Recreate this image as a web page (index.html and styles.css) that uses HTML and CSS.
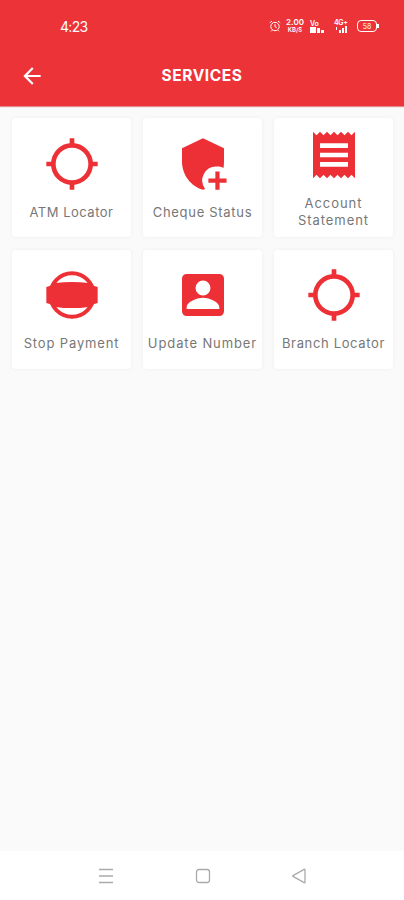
FILE: index.html
```
<!DOCTYPE html>
<html lang="en">
<head>
    <meta charset="UTF-8">
    <meta name="viewport" content="width=device-width, initial-scale=1.0">
    <title>Services</title>
    <link rel="stylesheet" href="styles.css">
</head>
<body>

    <header class="header">
        <!-- Phone status bar -->
        <div class="status-bar">
            <span class="time">4:23</span>
            <div class="status-icons">
                <svg class="alarm" viewBox="0 0 12 12" width="12" height="12">
                    <circle cx="6" cy="6.5" r="4.2"/>
                    <path d="M6 4.2v2.5l1.7.8M.8 2.8 3 1M11.2 2.8 9 1M3 10.3l-1 1M9 10.3l1 1"/>
                </svg>
                <div class="speed"><b>2.00</b><span>KB/S</span></div>
                <div class="network volte">
                    <span>Vo</span>
                    <svg viewBox="0 0 14 6" width="14" height="6"><path d="M0 0h6v6H0zM7 1h3v5H7zM11 3h3v3h-3z"/></svg>
                </div>
                <div class="network lte">
                    <span>4G+</span>
                    <svg viewBox="0 0 14 7" width="14" height="7"><path d="M2 1h1v3H2zM5 4h2v3H5zM8 2h2v5H8zM11 0h2v7h-2z"/></svg>
                </div>
                <div class="battery"><span>58</span></div>
            </div>
        </div>

        <!-- Title bar -->
        <div class="title-bar">
            <svg class="back" viewBox="0 0 24 24" width="26" height="26">
                <path d="M20 11H7.83l5.59-5.59L12 4l-8 8 8 8 1.41-1.41L7.83 13H20z"/>
            </svg>
            <h1>SERVICES</h1>
        </div>
    </header>

    <!-- Services -->
    <main class="services">
        <div class="card">
            <svg class="icon" viewBox="0 0 24 24">
                <circle class="ring" cx="12" cy="12" r="8"/>
                <path d="M11 1h2v3.2h-2zM11 19.8h2V23h-2zM1 11h3.2v2H1zM19.8 11H23v2h-3.2z"/>
            </svg>
            <span class="label atm">ATM Locator</span>
        </div>
        <div class="card">
            <svg class="icon" viewBox="0 0 24 24">
                <path d="M12 1 3 5.2V11c0 5.5 3.8 10.6 9 12l.9-.3A6 6 0 0 1 18.1 13.1c1 0 1.9.2 2.7.6.1-.9.2-1.8.2-2.7V5.2z"/>
                <path d="M17.3 15.2h1.8v3h3V20h-3v3h-1.8v-3h-3v-1.8h3z"/>
            </svg>
            <span class="label cheque">Cheque Status</span>
        </div>
        <div class="card">
            <svg class="icon" viewBox="0 0 24 24">
                <path d="M18 17H6v-2h12v2zm0-4H6v-2h12v2zm0-4H6V7h12v2zM3 22l1.5-1.5L6 22l1.5-1.5L9 22l1.5-1.5L12 22l1.5-1.5L15 22l1.5-1.5L18 22l1.5-1.5L21 22V2l-1.5 1.5L18 2l-1.5 1.5L15 2l-1.5 1.5L12 2l-1.5 1.5L9 2 7.5 3.5 6 2 4.5 3.5 3 2v20z"/>
            </svg>
            <span class="label account">Account<br>Statement</span>
        </div>
        <div class="card">
            <svg class="icon" viewBox="0 0 24 24">
                <circle class="ring thin" cx="12" cy="12" r="9.3"/>
                <path d="M1 8.6l1.8-.6L5 6.9Q12 5.9 19 6.9L21.2 8l1.8.6v6.8l-1.8.6-2.2 1.1Q12 18.1 5 17.1L2.8 16 1 15.4z"/>
            </svg>
            <span class="label stop">Stop Payment</span>
        </div>
        <div class="card">
            <svg class="icon" viewBox="0 0 24 24">
                <path fill-rule="evenodd" d="M5 3h14a2 2 0 0 1 2 2v14a2 2 0 0 1-2 2H5a2 2 0 0 1-2-2V5a2 2 0 0 1 2-2zM12 5.8a3.2 3.2 0 1 0 0 6.4 3.2 3.2 0 0 0 0-6.4zM5 18h14v-.8c0-2-4-4-7-4s-7 2-7 4z"/>
            </svg>
            <span class="label update">Update Number</span>
        </div>
        <div class="card">
            <svg class="icon" viewBox="0 0 24 24">
                <circle class="ring" cx="12" cy="12" r="8"/>
                <path d="M11 1h2v3.2h-2zM11 19.8h2V23h-2zM1 11h3.2v2H1zM19.8 11H23v2h-3.2z"/>
            </svg>
            <span class="label branch">Branch Locator</span>
        </div>
    </main>

    <!-- System navigation -->
    <nav class="nav">
        <svg viewBox="0 0 16 16" width="16" height="16"><path d="M1 1.5h14M1 8h14M1 14.5h14"/></svg>
        <svg viewBox="0 0 16 16" width="16" height="16"><rect x="1.5" y="1.5" width="13" height="13" rx="2.5"/></svg>
        <svg viewBox="0 0 16 16" width="16" height="16"><path d="M14 1.8v12.4q0 .8-.8.4L2 8.4q-.6-.4 0-.8l11.2-6.2q.8-.4.8.4z"/></svg>
    </nav>

</body>
</html>
```
FILE: styles.css
```
/* General Styles */
* {
    box-sizing: border-box;
}

body {
    margin: 0;
    height: 100vh;
    display: flex;
    flex-direction: column;
    font-family: Inter, "Open Sans", sans-serif;
    background-color: #fafafa;
}

svg {
    display: block;
    flex: none;
}

/* Header */
.header {
    height: 106px;
    background-color: #ec3338;
    color: white;
    box-shadow: 0 1px 1px rgba(200, 30, 35, 0.5);
}

.status-bar {
    height: 52px;
    padding: 0 27px 0 60px;
    display: flex;
    align-items: center;
    justify-content: space-between;
}

.time {
    font-size: 14px;
    letter-spacing: -0.7px;
}

.status-icons {
    display: flex;
    align-items: center;
    font-size: 7px;
    line-height: 7px;
}

.alarm {
    fill: none;
    stroke: white;
    margin-right: 4px;
}

.speed {
    width: 20px;
    display: flex;
    flex-direction: column;
    align-items: center;
    margin-right: 5px;
}

.speed b {
    font-size: 8px;
    line-height: 8px;
    font-weight: 600;
}

.speed span {
    font-size: 6px;
    line-height: 8px;
    font-weight: 600;
}

.network {
    width: 14px;
    fill: white;
    font-weight: 600;
}

.network span {
    display: block;
    letter-spacing: -0.3px;
}

.volte {
    margin-right: 10px;
}

.lte {
    margin-right: 9px;
}

.battery {
    width: 20px;
    height: 12px;
    border: 1px solid white;
    border-radius: 4px;
    display: flex;
    align-items: center;
    justify-content: center;
    position: relative;
}

.battery::after {
    content: "";
    position: absolute;
    right: -3px;
    top: 3px;
    width: 2px;
    height: 4px;
    background-color: white;
}

/* Title */
.title-bar {
    height: 47px;
    padding: 0 19px;
    display: grid;
    grid-template-columns: 26px 1fr 26px;
    align-items: center;
}

.back {
    fill: white;
}

h1 {
    margin: 0;
    font-size: 15.5px;
    font-weight: 700;
    letter-spacing: 0.6px;
    text-align: center;
}

/* Service cards */
.services {
    flex: 1;
    display: grid;
    grid-template-columns: repeat(3, 119px);
    grid-auto-rows: 119px;
    gap: 12.3px 12px;
    padding: 12.3px 12px 0;
}

.card {
    display: flex;
    flex-direction: column;
    align-items: center;
    justify-content: center;
    gap: 12px;
    padding-top: 1px;
    background-color: white;
    border-radius: 4px;
    box-shadow: 0 0 4px rgba(0, 0, 0, 0.05);
}

.icon {
    width: 56px;
    height: 56px;
    fill: #ec3036;
}

.ring {
    fill: none;
    stroke: #ec3036;
    stroke-width: 2;
}

.thin {
    stroke-width: 1.7;
}

.label {
    font-size: 13px;
    line-height: 17px;
    color: #777;
    text-align: center;
    white-space: nowrap;
    letter-spacing: 0.5px;
}

.cheque {
    letter-spacing: 0.7px;
}

.account {
    letter-spacing: 0.95px;
}

.stop {
    letter-spacing: 0.85px;
}

.update {
    letter-spacing: 0.9px;
}

.branch {
    letter-spacing: 0.65px;
}

/* Navigation */
.nav {
    height: 49px;
    padding: 0 97px 0 98px;
    display: flex;
    align-items: center;
    justify-content: space-between;
    background-color: white;
}

.nav svg {
    fill: none;
    stroke: #aaa;
    stroke-width: 1.3;
}
```
